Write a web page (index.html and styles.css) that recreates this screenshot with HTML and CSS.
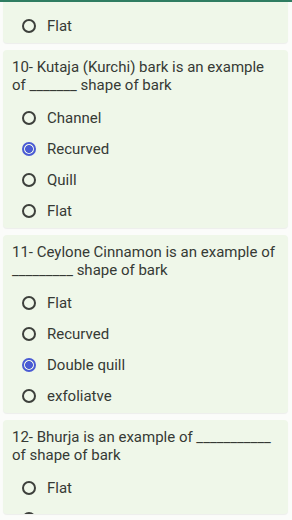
FILE: index.html
```html
<!DOCTYPE html>
<html lang="en">

<head>
   <meta charset="UTF-8">
   <meta name="viewport" content="width=device-width, initial-scale=1.0">
   <title>Bark quiz</title>
   <link rel="stylesheet" href="styles.css">
</head>

<body>
   <div class="topbar"></div>

   <main class="quiz">
      <section class="card card--tail">
         <ul class="options">
            <li class="option"><span class="radio"></span>Flat</li>
         </ul>
      </section>

      <section class="card">
         <p class="question">10- Kutaja (Kurchi) bark is an example of _______ shape of bark</p>
         <ul class="options">
            <li class="option"><span class="radio"></span>Channel</li>
            <li class="option"><span class="radio radio--checked"></span>Recurved</li>
            <li class="option"><span class="radio"></span>Quill</li>
            <li class="option"><span class="radio"></span>Flat</li>
         </ul>
      </section>

      <section class="card">
         <p class="question">11- Ceylone Cinnamon is an example of _________ shape of bark</p>
         <ul class="options">
            <li class="option"><span class="radio"></span>Flat</li>
            <li class="option"><span class="radio"></span>Recurved</li>
            <li class="option"><span class="radio radio--checked"></span>Double quill</li>
            <li class="option"><span class="radio"></span>exfoliatve</li>
         </ul>
      </section>

      <section class="card card--cut">
         <p class="question">12- Bhurja is an example of ___________ of shape of bark</p>
         <ul class="options">
            <li class="option"><span class="radio"></span>Flat</li>
            <!-- следующий вариант уходит за край, видна только верхушка кружка -->
            <li class="option"><span class="radio"></span></li>
         </ul>
      </section>

      <div class="next-strip"></div>
   </main>
</body>

</html>
```

FILE: styles.css
```css
*,
*::before,
*::after {
   box-sizing: border-box;
}

html,
body {
   margin: 0;
   padding: 0;
   height: 100%;
   overflow: hidden;
   background-color: #fbfcfa;
   font-family: Roboto, "Noto Sans", sans-serif;
   color: #363a35;
}

.topbar {
   height: 2px;
   background-color: #2f7d62;
}

.quiz {
   display: flex;
   flex-direction: column;
   gap: 7px;
   padding: 0 4px 0 3px;
}

.card {
   background-color: #eff7e9;
   border-radius: 4px;
   box-shadow: 0 1px 1px rgba(0, 0, 0, 0.06);
   padding: 9px 9px 2px 9px;
}

.card--tail {
   border-top-left-radius: 0;
   border-top-right-radius: 0;
   padding-top: 8px;
}

.card--tail .options {
   margin-top: 0;
}

.card--cut {
   height: 94px;
   overflow: hidden;
   flex-shrink: 0;
}

.question {
   margin: 0;
   font-size: 15px;
   line-height: 17.5px;
}

.options {
   list-style: none;
   margin: 8px 0 0 0;
   padding: 0 0 0 10px;
}

.option {
   display: flex;
   align-items: center;
   gap: 11px;
   height: 31px;
   font-size: 15px;
}

.radio {
   width: 14px;
   height: 14px;
   border: 2px solid #3d403c;
   border-radius: 50%;
   flex-shrink: 0;
}

.radio--checked {
   border-color: #4a5bd4;
   background: radial-gradient(circle, #4a5bd4 0 3.6px, transparent 4.2px);
}

.next-strip {
   height: 6px;
   margin-left: 5px;
   background-color: #f6dc86;
   border-radius: 3px 3px 0 0;
   flex-shrink: 0;
}
```
